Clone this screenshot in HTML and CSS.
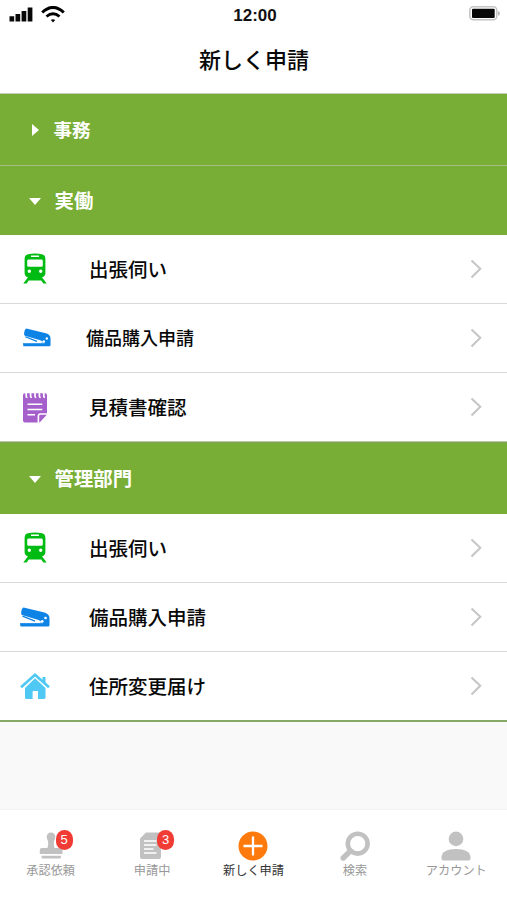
FILE: index.html
```html
<!DOCTYPE html>
<html lang="ja">
<head>
<meta charset="utf-8">
<title>新しく申請</title>
<link rel="stylesheet" href="styles.css">
</head>
<body>
<svg class="defs" width="0" height="0">
  <symbol id="train" viewBox="0 0 24 32">
    <path fill-rule="evenodd" d="M5 1.2Q12-.4 19 1.2Q22.400 2 22.400 6V20Q22.400 23.600 19 24.300L23.700 30.500H20.300L18.300 27.600H5.700L3.700 30.500H.3L5 24.300Q1.600 23.600 1.600 20V6Q1.600 2 5 1.200ZM8 2.500V4H16V2.500ZM5.200 6.500Q4.200 6.500 4.200 8V12.500Q4.200 13.700 5.500 13.700H18.500Q19.800 13.700 19.800 12.500V8Q19.800 6.500 18.800 6.500ZM6.300 16.500A1.700 1.700 0 1 0 6.300 19.900A1.700 1.700 0 1 0 6.300 16.500ZM17.700 16.500A1.700 1.700 0 1 0 17.700 19.900A1.700 1.700 0 1 0 17.700 16.500Z"/>
  </symbol>
  <symbol id="stapler" viewBox="0 0 30 20">
    <path d="M3.500.4L24.500 5.500Q29.500 7 29.500 11V18Q29.500 19.500 28 19.500H1.200Q.2 19.500.2 18.500V16H19.500L21.500 14.500L18.500 13L2 8Q.8 7.300 1.200 4.800Q1.800 1 3.500.4Z"/>
    <path d="M2.500 9.200L15 14.200" stroke="currentColor" stroke-width="1.400"/>
    <path d="M1 15.700H23" stroke="#fff" stroke-width=".7"/>
    <circle cx="25.500" cy="11" r="1.300" fill="#fff"/>
    <circle cx="22.300" cy="14.300" r="1.300" fill="#fff"/>
  </symbol>
  <symbol id="note" viewBox="0 0 24 31">
    <path d="M0 3Q0 1.200 1.800 1.200H22.200Q24 1.200 24 3V22.500L16.500 30.500H2Q0 30.500 0 28.500Z"/>
    <path d="M3.200 0V4.200Q3.200 5.500 4.500 5.500M7.600 0V4.200Q7.600 5.500 8.900 5.500M12 0V4.200Q12 5.500 13.300 5.500M16.400 0V4.200Q16.400 5.500 17.700 5.500M20.800 0V4.200Q20.800 5.500 22 5.500" fill="none" stroke="#fff" stroke-width="1.700"/>
    <path d="M4.500 12.300H19.300M4.500 17.500H19.300M4.500 22.800H12M15.400 31V24.200Q15.400 22 17.500 22H24" fill="none" stroke="#fff" stroke-width="1.600"/>
    <path d="M17 29.500V25Q17 23.500 18.500 23.500H22.500Z"/>
  </symbol>
  <symbol id="house" viewBox="0 0 30 27">
    <path d="M1 14.300L15 1.800L29 14.300" fill="none" stroke="currentColor" stroke-width="2.700"/>
    <path d="M22.500 4H25.500V11L22.500 8Z"/>
    <path d="M15 5.300L25.500 15V24.500Q25.500 26 24 26H18V18.700Q18 18 17.300 18H13.300Q12.600 18 12.600 18.700V26H6.500Q5 26 5 24.500V15Z"/>
  </symbol>
  <symbol id="chevron" viewBox="0 0 12 20">
    <path d="M1.500 1.500L10.300 9.800L1.500 18.500" fill="none" stroke="currentColor" stroke-width="2.100"/>
  </symbol>
</svg>
<div class="app">
  <div class="status">
    <div class="signal">
      <svg width="25" height="17" viewBox="0 0 25 17"><path d="M.5 10.300h4.700v5.200H.5zM6.500 8h4.700v7.500H6.500zM12.600 5h4.700v10.500h-4.700zM18.700 1.500h4.700v14h-4.700z"/></svg>
      <svg width="24" height="17" viewBox="0 0 24 17"><path d="M1.200 6.500Q12-3.700 22.800 6.500M5.500 10.500Q12 5 18.500 10.500" fill="none" stroke="#000" stroke-width="2.900"/><path d="M9.800 14Q12 12.300 14.200 14L12 16.500Z"/></svg>
    </div>
    <span class="clock">12:00</span>
    <svg class="battery" width="32" height="15" viewBox="0 0 32 15"><rect x=".8" y=".8" width="27" height="13" rx="3.500" fill="#fff" stroke="#c4c4c4" stroke-width="1.500"/><rect x="3" y="2.800" width="22.700" height="9.200" rx="1"/><path d="M29 5Q31 5.500 31 7.400Q31 9.300 29 9.800Z" fill="#bbb"/></svg>
  </div>
  <h1 class="title">新しく申請</h1>

  <div class="group office"><span class="arrow right"></span><span class="name">事務</span></div>
  <div class="group work"><span class="arrow"></span><span class="name">実働</span></div>
  <div class="row"><svg class="train"><use href="#train"/></svg><span class="label">出張伺い</span><svg class="chevron"><use href="#chevron"/></svg></div>
  <div class="row compact"><svg class="stapler"><use href="#stapler"/></svg><span class="label">備品購入申請</span><svg class="chevron"><use href="#chevron"/></svg></div>
  <div class="row last"><svg class="note"><use href="#note"/></svg><span class="label">見積書確認</span><svg class="chevron"><use href="#chevron"/></svg></div>
  <div class="group admin"><span class="arrow"></span><span class="name">管理部門</span></div>
  <div class="row"><svg class="train"><use href="#train"/></svg><span class="label">出張伺い</span><svg class="chevron"><use href="#chevron"/></svg></div>
  <div class="row"><svg class="stapler"><use href="#stapler"/></svg><span class="label">備品購入申請</span><svg class="chevron"><use href="#chevron"/></svg></div>
  <div class="row end"><svg class="house"><use href="#house"/></svg><span class="label">住所変更届け</span><svg class="chevron"><use href="#chevron"/></svg></div>
  <div class="space"></div>

  <nav class="tabs">
    <div class="tab">
      <div class="pic"><svg width="30" height="30" viewBox="0 0 30 30"><path d="M15 1.500A4.300 4.300 0 0 1 19.300 6Q19.300 8 18 10Q17.300 13 18.500 17H24.500Q26.500 17 26.500 19V23H3.800V19Q3.800 17 5.800 17H11.500Q12.700 13 12 10Q10.700 8 10.700 6A4.300 4.300 0 0 1 15 1.500ZM5.500 24.800H25V26Q25 27.500 23.500 27.500H7Q5.500 27.500 5.500 26Z"/></svg><span class="badge">5</span></div>
      <span>承認依頼</span>
    </div>
    <div class="tab">
      <div class="pic"><svg width="30" height="30" viewBox="0 0 30 30"><path d="M9 1.500H22Q24 1.500 24 3.500V26Q24 28 22 28H5Q3 28 3 26V7.500Z"/><path d="M7 10H19.500M7 14H19.500M7 18H16.500M7 22H19.500" stroke="#fff" stroke-width="1.300"/></svg><span class="badge">3</span></div>
      <span>申請中</span>
    </div>
    <div class="tab active">
      <div class="pic"><svg width="30" height="30" viewBox="0 0 30 30"><circle cx="15" cy="15" r="14.500" fill="#ff7a0d"/><path d="M15 5.500V24.500M5.500 15H24.500" stroke="#fff" stroke-width="2.300"/></svg></div>
      <span>新しく申請</span>
    </div>
    <div class="tab">
      <div class="pic"><svg width="30" height="30" viewBox="0 0 30 30"><circle cx="17.700" cy="12.700" r="9.900" fill="none" stroke="currentColor" stroke-width="4.600"/><path d="M10.500 19.800L3.200 27" stroke="currentColor" stroke-width="5.400" stroke-linecap="round"/></svg></div>
      <span>検索</span>
    </div>
    <div class="tab">
      <div class="pic"><svg width="30" height="30" viewBox="0 0 30 30"><circle cx="15" cy="7.900" r="7.300"/><path d="M.4 26.500Q1 18 15 18Q29 18 29.600 26.500Q29.700 29.500 27.500 29.500H2.500Q.3 29.500 .4 26.500Z"/></svg></div>
      <span>アカウント</span>
    </div>
  </nav>
</div>
</body>
</html>
```
FILE: styles.css
```css
* { box-sizing: border-box; }
body { margin: 0; background: #fff; color: #080808; font-family: "Noto Sans CJK JP", sans-serif; }
svg { display: block; fill: currentColor; flex: none; }
.defs { display: none; }
.app { width: 507px; height: 900px; display: flex; flex-direction: column; overflow: hidden; }
.app > * { flex: none; }

.status { height: 31px; padding: 0 6px 0 9px; display: grid; grid-template-columns: 1fr auto 1fr; align-items: center; }
.signal { display: flex; gap: 7px; padding-bottom: 3px; }
.clock { font: bold 17px/30px "Liberation Sans", sans-serif; color: #111; }
.battery { justify-self: end; margin-bottom: 5px; }
.title { height: 63px; margin: 0; padding-left: 1px; border-bottom: 1px solid #c5cdbb; text-align: center; font-size: 22px; font-weight: 500; line-height: 55px; }

.group { display: flex; align-items: center; padding-left: 29px; background: #78ae35; color: #fff; font-size: 19.400px; font-weight: 700; line-height: 28px; }
.office { height: 71px; font-size: 18.500px; padding-left: 32px; }
.work { height: 70px; border-top: 1px solid #a6bf87; }
.admin { height: 72px; border-top: 1px solid #82a25c; }
.arrow { width: 0; border: 6.500px solid transparent; border-top: 7px solid #fff; border-bottom: 0; margin-top: 2px; }
.arrow.right { border: 6.500px solid transparent; border-left: 7px solid #fff; border-right: 0; margin: 0 1px 0 0; }
.name { margin-left: 13.500px; padding-bottom: 1px; }
.office .name { padding-bottom: 2px; }

.row { height: 69px; display: grid; grid-template-columns: 70px 1fr 12px; align-items: center; padding: 0 25px 0 19px; border-bottom: 1px solid #dadada; font-size: 19.500px; font-weight: 500; line-height: 29px; }
.row.last { border-bottom: 1px solid #b7c9a2; }
.row.end { height: 70px; border-bottom: 2px solid #86aa65; }
.row.compact { font-size: 18px; grid-template-columns: 67px 1fr 12px; }
.label { padding-bottom: 2px; }
.train { width: 24px; height: 32px; margin-left: 4px; color: #0b1; }
.stapler { width: 30px; height: 20px; margin-left: 1px; color: #0d83e6; }
.compact .stapler { width: 28px; height: 19px; margin-left: 4px; margin-bottom: 1px; }
.note { width: 24px; height: 31px; margin-left: 4px; color: #a660cb; }
.house { width: 30px; height: 27px; margin-left: 1px; color: #4fc9f3; }
.chevron { width: 12px; height: 20px; color: #c6c6c6; }

.space { height: 88px; background: #f9f9f9; border-bottom: 1px solid #f3f3f3; }
.tabs { height: 91px; display: grid; grid-template-columns: repeat(5, 1fr); color: #c1c1c1; }
.tab { display: flex; flex-direction: column; align-items: center; padding-top: 21px; font-size: 12.200px; line-height: 18px; }
.tab > span { color: #999; white-space: nowrap; margin-top: 0; }
.tab.active > span { color: #333; }
.pic { position: relative; height: 30px; }
.badge { position: absolute; left: 20px; top: -1px; width: 17px; height: 20px; border-radius: 9px; background: #f13c35; color: #fff; font: 13px/20px "Liberation Sans", sans-serif; text-align: center; }
```
